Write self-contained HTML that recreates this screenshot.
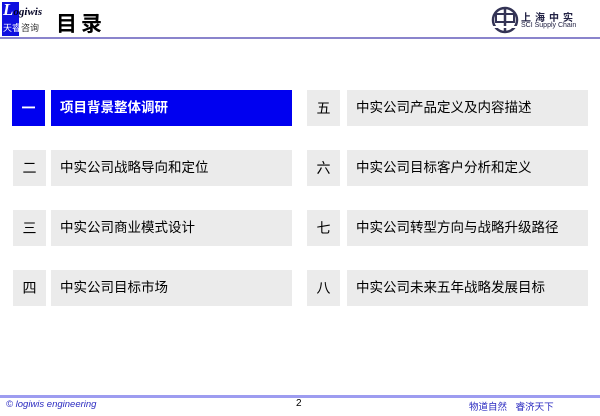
<!DOCTYPE html><html><head><meta charset="utf-8"><style>
body{margin:0;width:600px;height:416px;background:#fff;position:relative;overflow:hidden;font-family:"Liberation Sans","Noto Sans CJK SC",sans-serif}
.a{position:absolute}
.n{position:absolute;width:33px;height:36px;background:#ebebeb;color:#000;font-size:14px;line-height:36px;text-align:center}
.t{position:absolute;width:241px;height:36px;background:#ebebeb;color:#000;font-size:13.5px;line-height:36px;box-sizing:border-box;padding-left:9px}
.s{background:#0000f0;color:#fff;font-weight:bold}
</style></head><body>
<div class="a" style="left:2px;top:2px;width:17px;height:34px;background:#1010e0"></div>
<div class="a" style="left:3px;top:0;font-family:'Liberation Serif',serif;font-style:italic;font-weight:bold;font-size:17px;color:#fff">L<span style="font-size:11px;color:#002">ogiwis</span></div>
<div class="a" style="left:3px;top:21px;font-size:9px;color:#fff">天睿<span style="color:#333">咨询</span></div>
<div class="a" style="left:56px;top:8px;font-size:21px;font-weight:bold;letter-spacing:4px">目录</div>
<svg class="a" style="left:490px;top:6px" width="30" height="28" viewBox="0 0 30 28"><circle cx="15" cy="14" r="12" fill="none" stroke="#335" stroke-width="2.5"/><rect x="6" y="8" width="18" height="8" fill="none" stroke="#335" stroke-width="2"/><line x1="15" y1="2" x2="15" y2="27" stroke="#335" stroke-width="2.5"/><line x1="3" y1="21" x2="27" y2="21" stroke="#fff" stroke-width="2"/></svg>
<div class="a" style="left:521px;top:9px;font-size:10px;font-weight:bold;color:#224;letter-spacing:4px">上海中实</div>
<div class="a" style="left:521px;top:22px;font-size:7px;color:#224">SCI Supply Chain</div>
<div class="a" style="left:0;top:37px;width:600px;height:2px;background:#8a84cc"></div>

<div class="n s" style="left:12px;top:90px">一</div><div class="t s" style="left:51px;top:90px">项目背景整体调研</div>
<div class="n" style="left:13px;top:150px">二</div><div class="t" style="left:51px;top:150px">中实公司战略导向和定位</div>
<div class="n" style="left:13px;top:210px">三</div><div class="t" style="left:51px;top:210px">中实公司商业模式设计</div>
<div class="n" style="left:13px;top:270px">四</div><div class="t" style="left:51px;top:270px">中实公司目标市场</div>
<div class="n" style="left:307px;top:90px">五</div><div class="t" style="left:347px;top:90px">中实公司产品定义及内容描述</div>
<div class="n" style="left:307px;top:150px">六</div><div class="t" style="left:347px;top:150px">中实公司目标客户分析和定义</div>
<div class="n" style="left:307px;top:210px">七</div><div class="t" style="left:347px;top:210px">中实公司转型方向与战略升级路径</div>
<div class="n" style="left:307px;top:270px">八</div><div class="t" style="left:347px;top:270px">中实公司未来五年战略发展目标</div>

<div class="a" style="left:0;top:395px;width:600px;height:3px;background:#9d9cf0"></div>
<div class="a" style="left:6px;top:399px;font-size:9.5px;font-style:italic;color:#2a2ac0">© logiwis engineering</div>
<div class="a" style="left:296px;top:398px;font-size:10px">2</div>
<div class="a" style="left:469px;top:399px;font-size:9.5px;color:#2a2ac0;word-spacing:6px">物道自然 睿济天下</div>
</body></html>
